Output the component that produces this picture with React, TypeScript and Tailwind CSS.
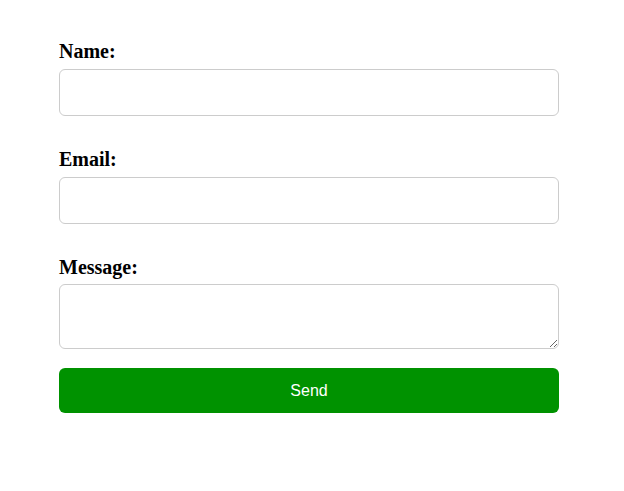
const App = () => {
  return (
    <div className="min-h-screen bg-white pl-[59px] pt-[40px]" style={{ width: 624 }}>
      <form className="w-[500px]" onSubmit={(e) => e.preventDefault()}>
        <div className="mb-[32px]">
          <label className="block mb-[6px] text-[20px] leading-[23px] font-bold text-black font-['Liberation_Serif',serif]">
            Name:
          </label>
          <input
            type="text"
            className="block w-full h-[47px] px-3 rounded-[6px] border border-[#cccccc] bg-white text-[16px] outline-none"
          />
        </div>
        <div className="mb-[32px]">
          <label className="block mb-[6px] text-[20px] leading-[23px] font-bold text-black font-['Liberation_Serif',serif]">
            Email:
          </label>
          <input
            type="email"
            className="block w-full h-[47px] px-3 rounded-[6px] border border-[#cccccc] bg-white text-[16px] outline-none"
          />
        </div>
        <div className="mb-[19px]">
          <label className="block mb-[5px] text-[20px] leading-[23px] font-bold text-black font-['Liberation_Serif',serif]">
            Message:
          </label>
          <textarea className="block w-full h-[65px] p-3 rounded-[6px] border border-[#cccccc] bg-white text-[16px] outline-none" />
        </div>
        <button
          type="submit"
          className="block w-full h-[45px] rounded-[6px] bg-[#009200] text-white text-[16px] font-['Liberation_Sans',Arial,sans-serif]"
        >
          Send
        </button>
      </form>
    </div>
  );
};

export default App;
